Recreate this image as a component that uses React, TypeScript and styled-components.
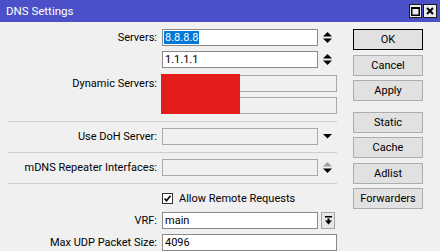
import styled, { createGlobalStyle } from "styled-components";

const GlobalStyle = createGlobalStyle`
  html, body {
    margin: 0;
    padding: 0;
    background: #f0f0f0;
  }
  body {
    font-family: Roboto, "Liberation Sans", Arial, sans-serif;
    font-size: 11px;
    color: #000;
  }
`;

const Window = styled.div`
  width: 440px;
  height: 251px;
  overflow: hidden;
  background: #f0f0f0;
`;

const TitleBar = styled.div`
  height: 22px;
  box-sizing: border-box;
  padding: 0 3px 0 6px;
  background: #4b4fc8;
  color: #fff;
  font-size: 11.5px;
  display: flex;
  align-items: center;
  justify-content: space-between;
`;

const TitleButtons = styled.div`
  display: flex;
  gap: 1px;
`;

const TitleButton = styled.div`
  width: 13px;
  height: 14px;
  box-sizing: border-box;
  border: 1px solid #1a1a1a;
  background: #ececec;
  display: flex;
  align-items: center;
  justify-content: center;
`;

const Body = styled.div`
  display: flex;
  gap: 16px;
  padding: 7px 0 0 8px;
`;

const Form = styled.div`
  width: 329px;
  display: flex;
  flex-direction: column;
`;

const Row = styled.div<{ $top?: number }>`
  display: grid;
  grid-template-columns: 154px 175px;
  align-items: start;
  margin-top: ${(p) => p.$top ?? 0}px;
`;

const Label = styled.div`
  text-align: right;
  padding-right: 5px;
  line-height: 17px;
  white-space: nowrap;
`;

const FieldLine = styled.div`
  display: flex;
  align-items: center;
`;

const Box = styled.div<{ $w: number; $off?: boolean }>`
  width: ${(p) => p.$w}px;
  height: 17px;
  box-sizing: border-box;
  border: 1px solid ${(p) => (p.$off ? "#a8a8a8" : "#8a8a8a")};
  background: ${(p) => (p.$off ? "#f0f0f0" : "#fff")};
  padding: 0 2px;
  line-height: 15px;
  white-space: nowrap;
`;

const Selected = styled.span`
  background: #0078d7;
  color: #fff;
  margin-left: -1px;
  padding: 0 1px;
`;

const IconCell = styled.div`
  width: 19px;
  height: 17px;
  display: flex;
  align-items: center;
  justify-content: center;
`;

const DropButton = styled.div`
  width: 14px;
  height: 17px;
  margin-left: 3px;
  box-sizing: border-box;
  border: 1px solid #a6a6a6;
  background: #e6e6e6;
  display: flex;
  align-items: center;
  justify-content: center;
`;

const DynStack = styled.div`
  position: relative;
  display: flex;
  flex-direction: column;
  gap: 5px;
`;

const Redact = styled.div`
  position: absolute;
  left: -1px;
  top: -1px;
  width: 79px;
  height: 40px;
  background: #e31c1c;
`;

const Separator = styled.div`
  height: 1px;
  background: #cdcdcd;
  margin: 7px 0 6px;
`;

const CheckLine = styled.div`
  display: flex;
  align-items: center;
  gap: 6px;
  height: 17px;
`;

const CheckBox = styled.div`
  width: 11px;
  height: 11px;
  box-sizing: border-box;
  border: 1px solid #333;
  background: #fff;
  display: flex;
  align-items: center;
  justify-content: center;
`;

const Buttons = styled.div`
  width: 70px;
  display: flex;
  flex-direction: column;
  gap: 4.5px;
`;

const Button = styled.div<{ $primary?: boolean; $gapAfter?: boolean }>`
  height: 21px;
  box-sizing: border-box;
  border: 1px solid ${(p) => (p.$primary ? "#000" : "#adadad")};
  background: #e1e1e1;
  display: flex;
  align-items: center;
  justify-content: center;
  margin-bottom: ${(p) => (p.$gapAfter ? 6 : 0)}px;
`;

const Spin = ({ up = "#000" }: { up?: string }) => (
  <svg width="9" height="11" viewBox="0 0 9 11">
    <polygon points="0,4.5 4.5,0 9,4.5" fill={up} />
    <polygon points="0,6.5 9,6.5 4.5,11" fill="#000" />
  </svg>
);

const DownArrow = () => (
  <svg width="9" height="5" viewBox="0 0 9 5">
    <polygon points="0,0 9,0 4.5,4.5" fill="#000" />
  </svg>
);

const BarArrow = () => (
  <svg width="7" height="9" viewBox="0 0 7 9">
    <rect x="0" y="0" width="7" height="1.5" fill="#000" />
    <rect x="2.5" y="2.5" width="2" height="2.5" fill="#000" />
    <polygon points="0,4.5 7,4.5 3.5,8.5" fill="#000" />
  </svg>
);

export default function App() {
  return (
    <Window>
      <GlobalStyle />
      <TitleBar>
        <span>DNS Settings</span>
        <TitleButtons>
          <TitleButton>
            <svg width="9" height="9" viewBox="0 0 9 9">
              <rect x="0.75" y="0.75" width="7.5" height="7.5" fill="none" stroke="#000" strokeWidth="1.5" />
              <rect x="0" y="0" width="9" height="2" fill="#000" />
            </svg>
          </TitleButton>
          <TitleButton style={{ width: 14 }}>
            <svg width="8" height="8" viewBox="0 0 8 8">
              <path d="M1 1 L7 7 M7 1 L1 7" stroke="#000" strokeWidth="2" />
            </svg>
          </TitleButton>
        </TitleButtons>
      </TitleBar>
      <Body>
        <Form>
          <Row>
            <Label>Servers:</Label>
            <FieldLine>
              <Box $w={156}>
                <Selected>8.8.8.8</Selected>
              </Box>
              <IconCell>
                <Spin />
              </IconCell>
            </FieldLine>
          </Row>
          <Row $top={5}>
            <Label />
            <FieldLine>
              <Box $w={156}>1.1.1.1</Box>
              <IconCell>
                <Spin />
              </IconCell>
            </FieldLine>
          </Row>
          <Row $top={7}>
            <Label>Dynamic Servers:</Label>
            <DynStack>
              <Box $w={175} $off />
              <Box $w={175} $off />
              <Redact />
            </DynStack>
          </Row>
          <Separator />
          <Row>
            <Label>Use DoH Server:</Label>
            <FieldLine>
              <Box $w={156} $off />
              <IconCell>
                <DownArrow />
              </IconCell>
            </FieldLine>
          </Row>
          <Separator />
          <Row>
            <Label>mDNS Repeater Interfaces:</Label>
            <FieldLine>
              <Box $w={156} $off />
              <IconCell>
                <Spin up="#a0a0a0" />
              </IconCell>
            </FieldLine>
          </Row>
          <Separator />
          <Row>
            <Label />
            <CheckLine>
              <CheckBox>
                <svg width="9" height="9" viewBox="0 0 9 9">
                  <path d="M1.5 4.5 L3.5 6.8 L7.5 1.8" fill="none" stroke="#000" strokeWidth="1.6" />
                </svg>
              </CheckBox>
              Allow Remote Requests
            </CheckLine>
          </Row>
          <Row $top={5}>
            <Label>VRF:</Label>
            <FieldLine>
              <Box $w={156}>main</Box>
              <DropButton>
                <BarArrow />
              </DropButton>
            </FieldLine>
          </Row>
          <Row $top={5}>
            <Label>Max UDP Packet Size:</Label>
            <Box $w={175}>4096</Box>
          </Row>
        </Form>
        <Buttons>
          <Button $primary>OK</Button>
          <Button>Cancel</Button>
          <Button $gapAfter>Apply</Button>
          <Button>Static</Button>
          <Button>Cache</Button>
          <Button>Adlist</Button>
          <Button>Forwarders</Button>
        </Buttons>
      </Body>
    </Window>
  );
}
